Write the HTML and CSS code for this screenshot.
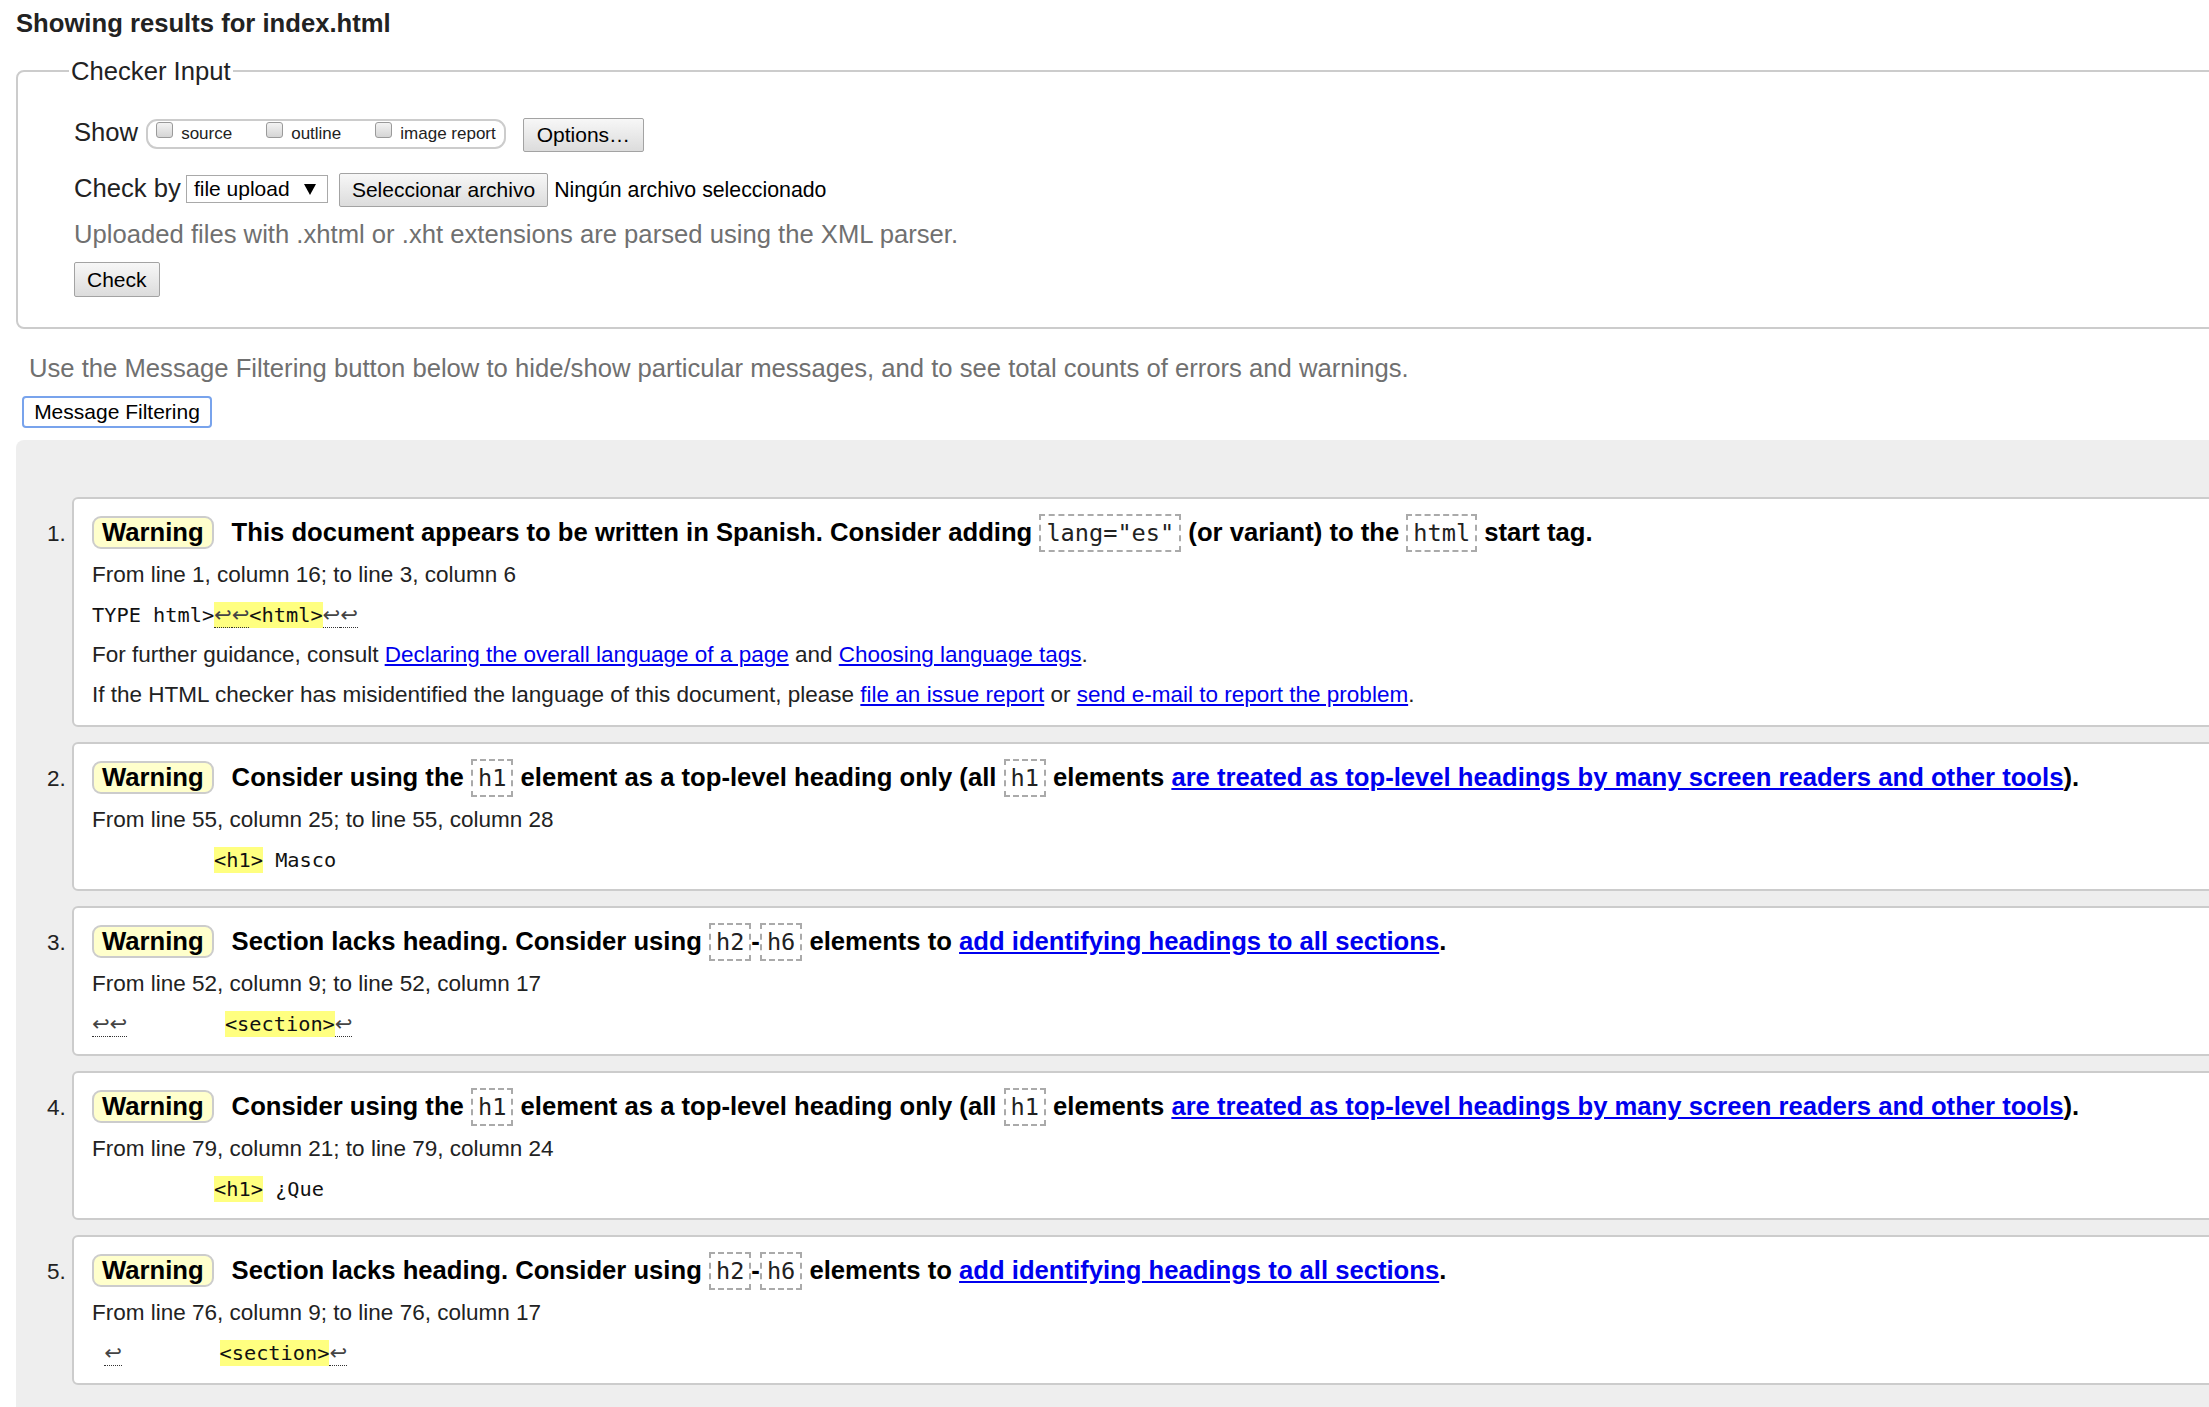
FILE: index.html
```html
<!DOCTYPE html>
<html lang="en">
<head>
<meta charset="utf-8">
<title>Showing results for index.html</title>
<link rel="stylesheet" href="styles.css">
</head>
<body>
<div class="page">
  <h2 class="title">Showing results for index.html</h2>
  <fieldset class="checker">
    <legend>Checker Input</legend>
    <div class="row row-show">
      <span class="label label-show">Show</span>
      <span class="checks">
        <label class="chk"><span class="cb"></span>source</label>
        <label class="chk"><span class="cb"></span>outline</label>
        <label class="chk"><span class="cb"></span>image report</label>
      </span>
      <button class="btn btn-options">Options…</button>
    </div>
    <div class="row row-check">
      <span class="label label-check">Check by</span>
      <span class="select">file upload<svg class="arrow" width="12" height="11" viewBox="0 0 12 11"><polygon points="0,0 12,0 6,11" fill="#000"/></svg></span>
      <button class="btn btn-file">Seleccionar archivo</button>
      <span class="filename">Ningún archivo seleccionado</span>
    </div>
    <p class="note">Uploaded files with .xhtml or .xht extensions are parsed using the XML parser.</p>
    <button class="btn btn-check">Check</button>
  </fieldset>
  <p class="filter-note">Use the Message Filtering button below to hide/show particular messages, and to see total counts of errors and warnings.</p>
  <button class="filter-btn">Message Filtering</button>
  <div class="results">
    <ol class="messages">
      <li class="card">
        <p class="msg"><span class="badge">Warning</span>This document appears to be written in Spanish. Consider adding <code class="c">lang="es"</code> (or variant) to the <code class="c">html</code> start tag.</p>
        <p class="loc">From line 1, column 16; to line 3, column 6</p>
        <p class="extract">TYPE html&gt;<b class="hl"><span class="lf">↩</span><span class="lf">↩</span>&lt;html&gt;</b><span class="lf">↩</span><span class="lf">↩</span></p>
        <p class="loc">For further guidance, consult <a href="#">Declaring the overall language of a page</a> and <a href="#">Choosing language tags</a>.</p>
        <p class="loc">If the HTML checker has misidentified the language of this document, please <a href="#">file an issue report</a> or <a href="#">send e-mail to report the problem</a>.</p>
      </li>
      <li class="card">
        <p class="msg"><span class="badge">Warning</span>Consider using the <code class="c">h1</code> element as a top-level heading only (all <code class="c">h1</code> elements <a href="#">are treated as top-level headings by many screen readers and other tools</a>).</p>
        <p class="loc">From line 55, column 25; to line 55, column 28</p>
        <p class="extract">          <b class="hl">&lt;h1&gt;</b> Masco</p>
      </li>
      <li class="card">
        <p class="msg"><span class="badge">Warning</span>Section lacks heading. Consider using <code class="c">h2</code>-<code class="c">h6</code> elements to <a href="#">add identifying headings to all sections</a>.</p>
        <p class="loc">From line 52, column 9; to line 52, column 17</p>
        <p class="extract"><span class="lf">↩</span><span class="lf">↩</span>        <b class="hl">&lt;section&gt;</b><span class="lf">↩</span></p>
      </li>
      <li class="card">
        <p class="msg"><span class="badge">Warning</span>Consider using the <code class="c">h1</code> element as a top-level heading only (all <code class="c">h1</code> elements <a href="#">are treated as top-level headings by many screen readers and other tools</a>).</p>
        <p class="loc">From line 79, column 21; to line 79, column 24</p>
        <p class="extract">          <b class="hl">&lt;h1&gt;</b> ¿Que</p>
      </li>
      <li class="card">
        <p class="msg"><span class="badge">Warning</span>Section lacks heading. Consider using <code class="c">h2</code>-<code class="c">h6</code> elements to <a href="#">add identifying headings to all sections</a>.</p>
        <p class="loc">From line 76, column 9; to line 76, column 17</p>
        <p class="extract"> <span class="lf">↩</span>        <b class="hl">&lt;section&gt;</b><span class="lf">↩</span></p>
      </li>
    </ol>
  </div>
</div>
</body>
</html>
```

FILE: styles.css
```css
html, body {
  margin: 0;
  padding: 0;
  background: #fff;
  overflow: hidden;
}

body {
  font-family: "Liberation Sans", Arial, sans-serif;
  color: #222;
}

.page {
  width: 2300px;
  padding-left: 16px;
  box-sizing: border-box;
}

.title {
  margin: 8px 0 0;
  font-size: 25.65px;
  line-height: 30px;
  font-weight: bold;
  color: #222;
}

/* Checker input fieldset */
.checker {
  margin: 18px 0 0;
  border: 2px solid #ccc;
  border-radius: 8px;
  padding: 32px 0 30px 56px;
  min-width: 0;
}

.checker legend {
  font-size: 25.65px;
  line-height: 30px;
  padding: 0 2px;
  margin-left: -5px;
  color: #222;
}

.row {
  display: flex;
  align-items: flex-start;
  height: 34px;
}

.row-check {
  margin-top: 21px;
}

.label {
  font-size: 25.65px;
  line-height: 30px;
  color: #222;
}

.label-show {
  margin-top: -1px;
  margin-right: 8px;
}

.label-check {
  margin-right: 5px;
}

.checks {
  display: flex;
  align-items: flex-start;
  box-sizing: border-box;
  height: 30px;
  margin: 1px 17px 0 0;
  padding: 0 8px;
  border: 2px solid #ccc;
  border-radius: 11px;
}

.chk {
  display: flex;
  align-items: flex-start;
  font-size: 17px;
  line-height: 26px;
  margin-right: 34px;
  color: #222;
}

.chk:last-child {
  margin-right: 0;
}

.cb {
  box-sizing: border-box;
  width: 17px;
  height: 16px;
  margin: 1px 8px 0 0;
  border: 1px solid #9a9a9a;
  border-radius: 3px;
  background: linear-gradient(#f3f3f3, #d5d5d5);
}

.btn {
  font-family: "Liberation Sans", Arial, sans-serif;
  font-size: 21px;
  height: 34px;
  padding: 0 12px;
  border: 1px solid #a3a3a3;
  border-radius: 2px;
  background: linear-gradient(#f7f7f7, #dcdcdc);
  color: #000;
  line-height: 32px;
}

.btn-options {
  padding: 0 13px;
}

.select {
  display: flex;
  align-items: center;
  justify-content: space-between;
  box-sizing: border-box;
  width: 142px;
  height: 28px;
  margin: 2px 11px 0 0;
  padding: 0 11px 0 7px;
  border: 1px solid #a9a9a9;
  background: #fff;
  font-size: 21px;
  color: #000;
}

.arrow {
  display: block;
}

.btn-file {
  margin-right: 6px;
}

.filename {
  font-size: 21.3px;
  line-height: 34px;
  color: #000;
}

.note {
  margin: 12px 0 0;
  font-size: 25.65px;
  line-height: 30px;
  color: #707070;
}

.btn-check {
  display: block;
  margin-top: 13px;
  height: 35px;
}

.filter-note {
  margin: 24px 0 0 13px;
  font-size: 25.65px;
  line-height: 30px;
  color: #707070;
}

.filter-btn {
  display: block;
  margin: 13px 0 0 6px;
  width: 190px;
  height: 32px;
  padding: 0;
  border: 2px solid #78a3ec;
  border-radius: 4px;
  background: #fff;
  font-family: "Liberation Sans", Arial, sans-serif;
  font-size: 21px;
  color: #000;
}

/* Results */
.results {
  margin-top: 12px;
  background: #eee;
  border-radius: 8px 0 0 0;
  padding: 57px 0 40px;
}

.messages {
  margin: 0;
  padding-left: 56px;
  list-style: decimal;
}

.card {
  background: #fff;
  border: 2px solid #ccc;
  border-radius: 6px;
  padding: 10px 0 9.5px 18px;
  margin-bottom: 15px;
  font-size: 22.5px;
  color: #222;
}

.card::marker {
  color: #222;
}

.card p {
  margin: 0;
  line-height: 40px;
}

.card .msg {
  font-size: 25.65px;
  line-height: 46px;
  font-weight: bold;
  color: #000;
}

.badge {
  display: inline-block;
  background: #ffffcc;
  border: 2px solid #ccc;
  border-radius: 9px;
  padding: 0 8px;
  line-height: 29px;
  margin-right: 18px;
}

.c {
  display: inline-block;
  font-family: "DejaVu Sans Mono", "Liberation Mono", monospace;
  font-size: 23.6px;
  font-weight: normal;
  line-height: 34px;
  padding: 0 5px;
  border: 2px dashed #aaa;
  color: #222;
}

.card a {
  color: #0000ee;
  text-decoration: underline;
}

.card .extract {
  font-family: "DejaVu Sans Mono", "Liberation Mono", monospace;
  font-size: 20.3px;
  white-space: pre;
  color: #111;
}

.hl {
  font-weight: normal;
  background: #ffff80;
  padding: 1px 0;
}

.lf {
  font-family: "DejaVu Sans", sans-serif;
  font-size: 21px;
  color: #444;
  border-bottom: 1px dotted #333;
}
```
